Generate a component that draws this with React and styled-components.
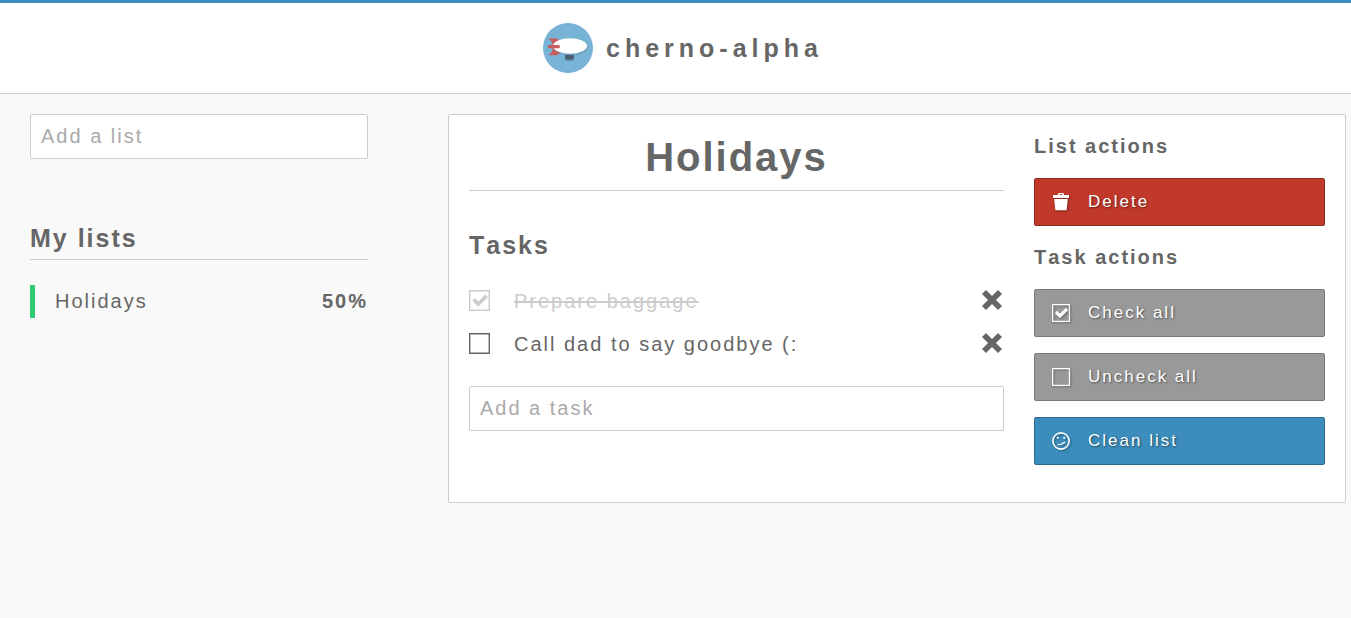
import React, { useState } from "react";
import styled, { createGlobalStyle, css } from "styled-components";

const GlobalStyle = createGlobalStyle`
  *, *::before, *::after { box-sizing: border-box; }
  body {
    margin: 0;
    background: #f9f9f9;
    color: #666;
    font-family: "Liberation Sans", Arial, sans-serif;
    font-size: 20px;
    font-kerning: none;
    line-height: 23px;
    letter-spacing: 2px;
  }
  h1, h2, h3, ul { margin: 0; padding: 0; }
  ul { list-style: none; }
`;

const Header = styled.header`
  display: flex;
  justify-content: center;
  align-items: center;
  gap: 13px;
  padding: 20px 0 20px 15px;
  background: #fff;
  border-top: 3px solid #3c8dbc;
  border-bottom: 1px solid #ccc;
`;

const Brand = styled.h1`
  font-size: 25px;
  line-height: 30px;
  letter-spacing: 5px;
`;

const Layout = styled.div`
  display: grid;
  grid-template-columns: minmax(0, 35fr) minmax(0, 93fr);
  column-gap: 80px;
  align-items: start;
  padding: 20px 5px 20px 30px;
`;

const TextField = styled.input`
  display: block;
  width: 100%;
  height: 45px;
  padding: 0 10px;
  background: #fff;
  border: 1px solid #ccc;
  border-radius: 2px;
  color: #666;
  font: inherit;
  letter-spacing: inherit;
  outline: none;
  &::placeholder { color: #aaa; opacity: 1; }
`;

const SectionTitle = styled.h2`
  font-size: 25px;
  line-height: 30px;
`;

const ListsTitle = styled(SectionTitle)`
  margin: 64px 0 25px;
  padding-bottom: 6px;
  border-bottom: 1px solid #ccc;
`;

const ListLink = styled.a`
  display: flex;
  justify-content: space-between;
  padding: 5px 0 5px 20px;
  border-left: 5px solid #2ecc71;
  color: inherit;
  text-decoration: none;
`;

const Card = styled.main`
  display: grid;
  grid-template-columns: minmax(0, 57fr) minmax(0, 31fr);
  column-gap: 30px;
  padding: 20px 20px 37px;
  background: #fff;
  border: 1px solid #ccc;
  border-radius: 2px;
`;

const ListTitle = styled.h2`
  margin-bottom: 39px;
  padding-bottom: 11px;
  border-bottom: 1px solid #ccc;
  font-size: 40px;
  line-height: 44px;
  text-align: center;
`;

const Tasks = styled.ul`
  && { margin: 19px 0 21px; }
`;

const Task = styled.li`
  display: flex;
  justify-content: space-between;
  align-items: center;
  height: 43px;
`;

const TaskLabel = styled.label`
  display: flex;
  align-items: center;
  gap: 24px;
  cursor: pointer;
  ${(p) => p.$done && css`color: #ccc;`}
`;

const TaskText = styled.span`
  padding-top: 2px;
  ${(p) => p.$done && css`
    text-decoration: line-through;
    text-decoration-thickness: 2px;
  `}
`;

const CheckSlot = styled.span`
  display: grid;
  > * {
    grid-area: 1 / 1;
    width: 21px;
    height: 21px;
  }
  svg { pointer-events: none; }
`;

const Check = styled.input`
  appearance: none;
  margin: 0;
  cursor: pointer;
`;

const RemoveButton = styled.button`
  display: flex;
  padding: 0 1px 1px;
  border: 0;
  background: none;
  color: #666;
  cursor: pointer;
  svg { width: 22px; height: 22px; }
`;

const ActionsTitle = styled.h3`
  margin-bottom: 21px;
  font-size: 20px;
  line-height: 22px;
`;

const ActionGroup = styled.section`
  display: flex;
  flex-direction: column;
  & + & { margin-top: 20px; }
`;

const tones = {
  red: ["#c0392b", "#8e2a20"],
  grey: ["#999", "#777"],
  blue: ["#3c8dbc", "#2d6a8d"],
};

const ActionButton = styled.button`
  display: flex;
  align-items: center;
  gap: 18px;
  padding: 13px 17px;
  border: 1px solid ${(p) => tones[p.$tone][1]};
  border-radius: 2px;
  background: ${(p) => tones[p.$tone][0]};
  color: #fff;
  font-family: inherit;
  font-size: 17px;
  line-height: 20px;
  letter-spacing: 2px;
  text-shadow: 1px 1px 2px rgba(0, 0, 0, 0.5);
  cursor: pointer;
  & + & { margin-top: 16px; }
  svg {
    width: 18px;
    height: 18px;
    filter: drop-shadow(1px 1px 1px rgba(0, 0, 0, 0.35));
  }
`;

const Logo = () => (
  <svg width="50" height="50" viewBox="0 0 50 50" aria-hidden="true">
    <circle cx="25" cy="25" r="25" fill="#77b3d4" />
    <path d="M22 34h9v2q0 2-2 2h-5q-2 0-2-2z" fill="#3d6f8d" opacity=".4" />
    <path d="M22 32h9v2.500q0 2-2 2h-5q-2 0-2-2z" fill="#4f5d73" />
    <path d="M5 15.600h9l4 3-4 4H9.500q.5-4-4.500-7zM5 32.200h9l4-3-4-4H9.500q.5 4-4.500 7z" fill="#c75c5c" />
    <ellipse cx="27.500" cy="24.400" rx="17" ry="7.800" fill="#4e87a8" opacity=".45" />
    <ellipse cx="27" cy="23" rx="17" ry="7.700" fill="#fff" />
    <path d="M5 22h10.500q1.500 0 1.500 1.600t-1.500 1.600H5z" fill="#c75c5c" />
  </svg>
);

const CrossIcon = () => (
  <svg viewBox="0 0 22 22" fill="none" stroke="currentColor" strokeWidth="5.600" strokeLinejoin="round" aria-hidden="true">
    <path d="M3 3l16 16M19 3L3 19" />
  </svg>
);

const TrashIcon = () => (
  <svg viewBox="0 0 18 18" fill="currentColor" aria-hidden="true">
    <path d="M6 2V1.200Q6 0 7.200 0h3.600Q12 0 12 1.200V2h5v3H1V2zM7.300 1.200V2h3.400v-.8z" />
    <path d="M2.200 6h13.600l-1.200 11.300h-11.200z" />
  </svg>
);

const BoxIcon = ({ checked }) => (
  <svg viewBox="0 0 18 18" fill="none" stroke="currentColor" aria-hidden="true">
    <path d="M.6.6h16.800v16.800H.6z" strokeWidth="1.200" />
    {checked && <path d="M4 8l4 4 7-7" strokeWidth="3.200" />}
  </svg>
);

const FaceIcon = () => (
  <svg viewBox="0 0 18 18" fill="none" stroke="currentColor" aria-hidden="true">
    <circle cx="9" cy="9" r="8.100" strokeWidth="1.600" />
    <circle cx="5.800" cy="5.800" r="1.100" fill="currentColor" stroke="none" />
    <circle cx="12.200" cy="5.800" r="1.100" fill="currentColor" stroke="none" />
    <path d="M6.200 12.600l2.600-.2 4-2" strokeWidth="1.300" strokeLinecap="round" />
  </svg>
);

export default function App() {
  const [tasks, setTasks] = useState([
    { id: 1, text: "Prepare baggage", done: true },
    { id: 2, text: "Call dad to say goodbye (:", done: false },
  ]);
  const setAll = (done) => setTasks(tasks.map((t) => ({ ...t, done })));
  const toggle = (id) =>
    setTasks(tasks.map((t) => (t.id === id ? { ...t, done: !t.done } : t)));
  const percent = tasks.length
    ? Math.round((100 * tasks.filter((t) => t.done).length) / tasks.length)
    : 0;

  return (
    <>
      <GlobalStyle />
      <Header>
        <Logo />
        <Brand>cherno-alpha</Brand>
      </Header>
      <Layout>
        <aside>
          <TextField placeholder="Add a list" aria-label="Add a list" />
          <ListsTitle>My lists</ListsTitle>
          <ListLink href="#holidays">
            <span>Holidays</span>
            <strong>{percent}%</strong>
          </ListLink>
        </aside>
        <Card>
          <section>
            <ListTitle>Holidays</ListTitle>
            <SectionTitle as="h3">Tasks</SectionTitle>
            <Tasks>
              {tasks.map((t) => (
                <Task key={t.id}>
                  <TaskLabel $done={t.done}>
                    <CheckSlot>
                      <Check type="checkbox" checked={t.done} onChange={() => toggle(t.id)} />
                      <BoxIcon checked={t.done} />
                    </CheckSlot>
                    <TaskText $done={t.done}>{t.text}</TaskText>
                  </TaskLabel>
                  <RemoveButton
                    aria-label={`Remove ${t.text}`}
                    onClick={() => setTasks(tasks.filter((x) => x.id !== t.id))}
                  >
                    <CrossIcon />
                  </RemoveButton>
                </Task>
              ))}
            </Tasks>
            <TextField placeholder="Add a task" aria-label="Add a task" />
          </section>
          <div>
            <ActionGroup>
              <ActionsTitle>List actions</ActionsTitle>
              <ActionButton $tone="red"><TrashIcon />Delete</ActionButton>
            </ActionGroup>
            <ActionGroup>
              <ActionsTitle>Task actions</ActionsTitle>
              <ActionButton $tone="grey" onClick={() => setAll(true)}>
                <BoxIcon checked />Check all
              </ActionButton>
              <ActionButton $tone="grey" onClick={() => setAll(false)}>
                <BoxIcon />Uncheck all
              </ActionButton>
              <ActionButton $tone="blue" onClick={() => setTasks(tasks.filter((t) => !t.done))}>
                <FaceIcon />Clean list
              </ActionButton>
            </ActionGroup>
          </div>
        </Card>
      </Layout>
    </>
  );
}
